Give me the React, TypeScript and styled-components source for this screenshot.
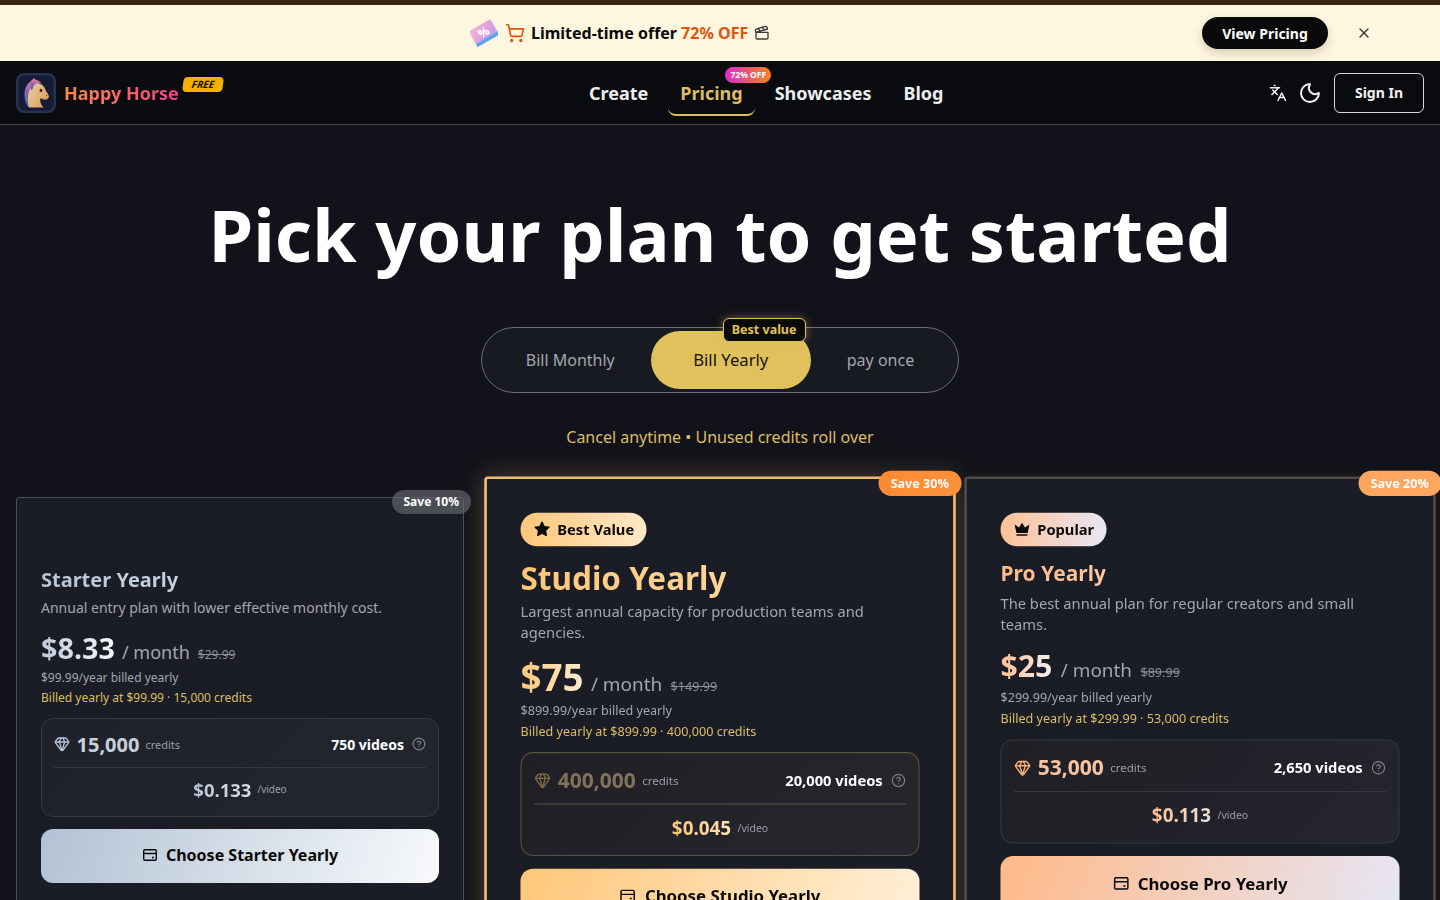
import React from 'react';
import styled, { createGlobalStyle } from 'styled-components';
import { Clapperboard, CircleHelp, Gem, Languages, Moon, ShoppingCart, X } from 'lucide-react';

const GlobalStyle = createGlobalStyle`
  html, body {
    margin: 0;
    height: 900px;
    overflow: hidden;
    background: #12131a;
    font-family: "Noto Sans", "Open Sans", sans-serif;
    color: #fff;
  }
  * { box-sizing: border-box; }
`;

const TopStrip = styled.div`
  height: 5px;
  background: #3a2516;
`;
const Banner = styled.div`
  height: 56px;
  background: #fff6e0;
  display: flex;
  align-items: center;
  padding: 0 68px 0 470px;
  color: #0a0a0a;
`;
const OfferText = styled.span`
  font-size: 16px;
  font-weight: 700;
  margin: 0 6px 0 6px;
  em {
    font-style: normal;
    color: #e0540f;
  }
`;
const CartIcon = styled(ShoppingCart)`
  color: #e0540f;
  margin-left: 7px;
`;
const ClapIcon = styled(Clapperboard)`
  color: #3a3a3a;
`;
const ViewPricing = styled.button`
  margin-left: auto;
  width: 126px;
  height: 32px;
  border: 0;
  border-radius: 16px;
  background: #0a0a0a;
  color: #fff;
  font: 700 14px "Noto Sans", sans-serif;
  box-shadow: 0 4px 10px rgba(60, 40, 10, 0.2);
`;
const CloseButton = styled.button`
  margin-left: 28px;
  width: 16px;
  height: 16px;
  padding: 0;
  border: 0;
  background: none;
  color: #3d3a36;
  display: flex;
`;

const NavBar = styled.header`
  height: 64px;
  background: #0a0b0e;
  border-bottom: 1px solid #3c3f48;
  display: flex;
  align-items: center;
  padding: 0 16px;
`;
const LogoBlock = styled.div`
  position: relative;
  width: 207px;
  display: flex;
  align-items: center;
  gap: 8px;
`;
const LogoMark = styled.svg`
  width: 40px;
  height: 40px;
  border-radius: 8px;
  flex: none;
`;
const BrandName = styled.span`
  font-size: 18px;
  font-weight: 700;
  background: linear-gradient(90deg, #ff8a4c, #ee3f84);
  -webkit-background-clip: text;
  background-clip: text;
  color: transparent;
`;
const FreeBadge = styled.span`
  position: absolute;
  left: 167px;
  top: 4px;
  width: 40px;
  height: 15px;
  border-radius: 4px;
  background: #f5b000;
  color: #1a1200;
  font-size: 10px;
  font-weight: 700;
  font-style: italic;
  line-height: 15px;
  text-align: center;
  transform: skewX(-8deg);
`;
const NavLinks = styled.nav`
  margin-left: 354px;
  display: flex;
  align-items: center;
  gap: 8px;
`;
const NavItem = styled.a<{ $active?: boolean }>`
  position: relative;
  height: 46px;
  padding: 2px 12px 0;
  display: flex;
  align-items: center;
  font-size: 18px;
  font-weight: 700;
  color: ${p => (p.$active ? '#dcbd62' : '#eceef2')};
  border-bottom: 2px solid ${p => (p.$active ? '#dcbd62' : 'transparent')};
  border-radius: 8px;
`;
const OffBadge = styled.span`
  position: absolute;
  left: 57px;
  top: -3px;
  width: 46px;
  height: 16px;
  border-radius: 8px;
  background: linear-gradient(90deg, #e02cc8, #f9801e);
  color: #fff;
  font-size: 8.5px;
  font-weight: 700;
  line-height: 16px;
  text-align: center;
`;
const NavRight = styled.div`
  margin-left: auto;
  display: flex;
  align-items: center;
  color: #f2f2f2;
`;
const MoonIcon = styled(Moon)`
  margin: 0 12px 0 11px;
`;
const SignIn = styled.button`
  width: 90px;
  height: 40px;
  border: 1px solid #d8d8d8;
  border-radius: 6px;
  background: transparent;
  color: #f2f2f2;
  font: 700 14px "Noto Sans", sans-serif;
`;

const Main = styled.main`
  padding-top: 59px;
`;
const Heading = styled.h1`
  margin: 0;
  text-align: center;
  font-size: 72px;
  line-height: 100px;
  font-weight: 700;
  letter-spacing: 0.04px;
  color: #fff;
`;
const ToggleRow = styled.div`
  margin-top: 43px;
  display: flex;
  justify-content: center;
`;
const Toggle = styled.div`
  position: relative;
  height: 66px;
  padding: 3px 8px;
  display: flex;
  background: #181a22;
  border: 1px solid #6b6e76;
  border-radius: 33px;
`;
const ToggleOption = styled.button<{ $active?: boolean }>`
  height: 58px;
  width: ${p => (p.$active ? '160px' : 'auto')};
  padding: 0 36px ${p => (p.$active ? '2px' : '0')};
  border: 0;
  border-radius: 29px;
  background: ${p => (p.$active ? '#e0c15c' : 'transparent')};
  color: ${p => (p.$active ? '#16140c' : '#a3a6b0')};
  font: 400 ${p => (p.$active ? '16.7px' : '16px')} "Noto Sans", sans-serif;
`;
const BestValueTag = styled.span`
  position: absolute;
  left: 241px;
  top: -10px;
  height: 24px;
  padding: 0 9px 0 8px;
  border: 1px solid #e0c15c;
  border-radius: 6px;
  background: #0a0a0a;
  box-shadow: 0 0 8px rgba(224, 193, 92, 0.45);
  color: #e0c15c;
  font-size: 12.5px;
  font-weight: 700;
  line-height: 22px;
`;
const Caption = styled.p`
  margin: 32px 0 0;
  text-align: center;
  font-size: 16px;
  line-height: 24px;
  color: #dcbd62;
`;

const CardGrid = styled.section`
  margin-top: 48px;
  padding: 0 16px;
  display: grid;
  grid-template-columns: repeat(3, 1fr);
  gap: 32px;
`;

type Tone = {
  border: string;
  glow: string;
  save: string;
  button: string;
  boxBorder: string;
  boxBg: string;
  creditColor: string;
  gemColor: string;
};
type Sizes = {
  featured: boolean;
  title: number;
  titleLine: number;
  descGap: number;
  price: number;
  priceGap: number;
  priceHeight: number;
  priceLine: number;
  unitGap: number;
  boxGap: number;
  perSize: number;
};

const Card = styled.article<{ $tone: Tone; $s: Sizes }>`
  position: relative;
  height: 800px;
  padding: ${p => (p.$s.featured ? '32px' : '24px')};
  background: #1a1d26;
  border: ${p => (p.$s.featured ? 2 : 1)}px solid ${p => p.$tone.border};
  border-radius: 3px;
  box-shadow: ${p => p.$tone.glow};
  transform: ${p => (p.$s.featured ? 'scale(1.05)' : 'none')};
`;
const SaveTag = styled.span<{ $tone: Tone }>`
  position: absolute;
  top: -8px;
  right: -8px;
  height: 24px;
  padding: 0 12px;
  border-radius: 12px;
  background: ${p => p.$tone.save};
  color: #fff;
  font-size: 12px;
  font-weight: 700;
  line-height: 24px;
`;
const BadgeSlot = styled.div`
  height: 32px;
  margin-bottom: 12px;
`;
const PlanBadge = styled.span<{ $bg: string }>`
  height: 32px;
  padding: 0 12px 1px;
  display: inline-flex;
  align-items: center;
  gap: 6px;
  border-radius: 16px;
  background: ${p => p.$bg};
  color: #0a0a0a;
  font-size: 14px;
  font-weight: 700;
`;
const GradientText = styled.span<{ $bg: string }>`
  background: ${p => p.$bg};
  -webkit-background-clip: text;
  background-clip: text;
  color: transparent;
`;
const Title = styled.h2<{ $s: Sizes }>`
  margin: 0;
  font-size: ${p => p.$s.title}px;
  line-height: ${p => p.$s.titleLine}px;
  font-weight: 700;
`;
const Description = styled.p<{ $s: Sizes }>`
  margin: ${p => p.$s.descGap}px 0 0;
  font-size: 14px;
  line-height: 20px;
  color: #a3a6b0;
`;
const PriceRow = styled.div<{ $s: Sizes }>`
  height: ${p => p.$s.priceHeight}px;
  margin-top: ${p => p.$s.priceGap}px;
  display: flex;
  align-items: baseline;
  line-height: ${p => p.$s.priceLine}px;
`;
const Price = styled(GradientText)<{ $s: Sizes }>`
  font-size: ${p => p.$s.price}px;
  font-weight: 700;
`;
const Unit = styled.span<{ $s: Sizes }>`
  margin-left: ${p => p.$s.unitGap}px;
  font-size: 18px;
  color: #a3a6b0;
`;
const Strike = styled.s`
  margin-left: 8px;
  font-size: 12px;
  color: #8a8d96;
`;
const YearLine = styled.p`
  margin: 3px 0 0;
  font-size: 12px;
  line-height: 18px;
  color: #a3a6b0;
`;
const BilledLine = styled(YearLine)`
  margin-top: 2px;
  color: #dcbd62;
`;
const CreditBox = styled.div<{ $tone: Tone; $s: Sizes }>`
  margin-top: ${p => p.$s.boxGap}px;
  height: 99px;
  padding: 12px;
  border: 1px solid ${p => p.$tone.boxBorder};
  border-radius: 12px;
  background: ${p => p.$tone.boxBg};
`;
const CreditRow = styled.div<{ $s: Sizes }>`
  height: 28px;
  padding-bottom: ${p => (p.$s.featured ? '1px' : '2px')};
  display: flex;
  align-items: center;
`;
const GemIcon = styled(Gem)<{ $color: string }>`
  color: ${p => p.$color};
  margin-right: 6.5px;
  flex: none;
`;
const CreditCount = styled.span<{ $color: string }>`
  font-size: 20px;
  font-weight: 700;
  color: ${p => p.$color};
`;
const SmallLabel = styled.span`
  margin-left: 6px;
  font-size: 11px;
  color: #9a9da6;
`;
const Videos = styled.span`
  margin-left: auto;
  font-size: 14px;
  font-weight: 700;
  color: #fff;
`;
const HelpIcon = styled(CircleHelp)`
  margin-left: 8px;
  color: #7c7f88;
`;
const Divider = styled.div<{ $tone: Tone }>`
  height: 1px;
  margin: 8px 0;
  background: ${p => p.$tone.boxBorder};
`;
const PerVideo = styled.div<{ $s: Sizes }>`
  height: 28px;
  padding-bottom: ${p => (p.$s.featured ? '0' : '2px')};
  display: flex;
  justify-content: center;
  align-items: center;
`;
const PerVideoPrice = styled(GradientText)<{ $s: Sizes }>`
  font-size: ${p => p.$s.perSize}px;
  font-weight: 700;
`;
const PerVideoLabel = styled.span`
  margin-left: 6px;
  font-size: 10px;
  color: #9a9da6;
`;
const ChooseButton = styled.button<{ $tone: Tone }>`
  width: 100%;
  height: 54px;
  margin-top: 12px;
  padding: 0 0 2px;
  border: 0;
  border-radius: 12px;
  background: ${p => p.$tone.button};
  color: #0a0a0a;
  font: 700 16px "Noto Sans", sans-serif;
  display: flex;
  align-items: center;
  justify-content: center;
  gap: 8px;
`;
const BadgeGlyph = styled.svg`
  width: 17px;
  height: 17px;
  flex: none;
`;
const CardGlyph = styled.svg`
  width: 16px;
  height: 16px;
  flex: none;
`;

const HorseLogo = () => (
  <LogoMark viewBox="0 0 40 40">
    <defs>
      <linearGradient id="mane" x1="0" y1="0" x2="0" y2="1">
        <stop offset="0" stopColor="#e782a8" />
        <stop offset="0.45" stopColor="#8a5fb4" />
        <stop offset="1" stopColor="#3c6fb8" />
      </linearGradient>
      <linearGradient id="coat" x1="0" y1="0" x2="1" y2="1">
        <stop offset="0" stopColor="#f0cf9c" />
        <stop offset="1" stopColor="#d99f62" />
      </linearGradient>
    </defs>
    <rect width="40" height="40" fill="#26324f" />
    <rect x="2.500" y="2.500" width="35" height="35" rx="6" fill="#141c36" />
    <path d="M19 6C12 8 8 15 8.500 23c.2 4 1.500 8 3.500 11l7-4 3-20z" fill="url(#mane)" />
    <path d="M16 13l1-8 4 5c5 .5 7.500 3.500 8.500 7l3 5c1 2.500-.5 4.500-3 4.500-2 0-3.500-.5-5-1.500-1 3 0 6 3 9.500H13c-2-7-1.500-16 3-21.500z" fill="url(#coat)" />
    <path d="M15 8c3-2.500 8-1.500 11 2.500-4-1-7 0-8.500 2.500-.5 2-1 3.500-2 4.500C14 14 14 10.500 15 8z" fill="url(#mane)" />
    <ellipse cx="25" cy="17.500" rx="1.400" ry="1.700" fill="#3a2212" />
    <circle cx="30.500" cy="22.500" r="0.700" fill="#7a4f2e" />
    <path d="M26 25.500c2 .8 4 .8 5.500-.3" stroke="#a8733f" strokeWidth="0.700" fill="none" />
  </LogoMark>
);

const TicketArt = () => (
  <svg width="28" height="28" viewBox="0 0 28 28">
    <defs>
      <linearGradient id="ticket" x1="0" y1="0" x2="1" y2="1">
        <stop offset="0" stopColor="#f9b3d4" />
        <stop offset="0.65" stopColor="#d69fe4" />
        <stop offset="1" stopColor="#b5a8ee" />
      </linearGradient>
    </defs>
    <g transform="rotate(-30 14 14)">
      <rect x="1.500" y="5" width="25" height="18" rx="2" fill="url(#ticket)" />
      <rect x="1.500" y="19.500" width="25" height="3.500" fill="#5aa8ea" />
      <text x="14" y="17.500" textAnchor="middle" fontSize="12" fontWeight="700" fill="#fff" fontFamily="Noto Sans">%</text>
    </g>
  </svg>
);

const StarGlyph = () => (
  <BadgeGlyph viewBox="0 0 24 24">
    <path fill="#0a0a0a" stroke="#0a0a0a" strokeWidth="2" strokeLinejoin="round" d="M12 3l2.800 5.900 6.400.8-4.700 4.400 1.200 6.400L12 17.400l-5.700 3.100 1.200-6.400L2.800 9.700l6.400-.8z" />
  </BadgeGlyph>
);

const CrownGlyph = () => (
  <BadgeGlyph viewBox="0 0 24 24">
    <path fill="#0a0a0a" d="M12 3.500l4 6.500 6-4-2.500 11.500h-15L2 6l6 4z" />
    <rect x="4.500" y="19" width="15" height="2.200" rx="0.600" fill="#0a0a0a" />
  </BadgeGlyph>
);

const PlanCardGlyph = () => (
  <CardGlyph viewBox="0 0 16 16" fill="none" stroke="#0a0a0a" strokeWidth="1.400">
    <rect x="1.700" y="2.700" width="12.600" height="10.600" rx="1.200" />
    <path d="M1.700 6.500h12.600M10 10.500h2" />
  </CardGlyph>
);

const plans: {
  name: string;
  desc: string;
  price: string;
  strike: string;
  year: string;
  billed: string;
  credits: string;
  videos: string;
  perVideo: string;
  save: string;
  badge?: { label: string; bg: string; icon: React.ReactNode };
  titleBg: string;
  priceBg: string;
  perBg: string;
  tone: Tone;
  sizes: Sizes;
}[] = [
  {
    name: 'Starter Yearly',
    desc: 'Annual entry plan with lower effective monthly cost.',
    price: '$8.33',
    strike: '$29.99',
    year: '$99.99/year billed yearly',
    billed: 'Billed yearly at $99.99 · 15,000 credits',
    credits: '15,000',
    videos: '750 videos',
    perVideo: '$0.133',
    save: 'Save 10%',
    titleBg: 'linear-gradient(90deg, #b8c5d6, #c8d2de)',
    priceBg: 'linear-gradient(90deg, #c0ccda, #f5f7fa)',
    perBg: 'linear-gradient(90deg, #b8c5d6, #d8dee6)',
    tone: {
      border: '#4a4e58',
      glow: 'none',
      save: 'rgba(110, 112, 118, 0.6)',
      button: 'linear-gradient(110deg, #b2c1d4, #f8fafc)',
      boxBorder: '#363943',
      boxBg: 'linear-gradient(135deg, #1f222b, #24262e)',
      creditColor: '#c8d0dc',
      gemColor: '#b8c5d6',
    },
    sizes: {
      featured: false, title: 20, titleLine: 28, descGap: 4, price: 28.8, priceGap: 12,
      priceHeight: 36, priceLine: 36, unitGap: 7, boxGap: 11, perSize: 18.5,
    },
  },
  {
    name: 'Studio Yearly',
    desc: 'Largest annual capacity for production teams and agencies.',
    price: '$75',
    strike: '$149.99',
    year: '$899.99/year billed yearly',
    billed: 'Billed yearly at $899.99 · 400,000 credits',
    credits: '400,000',
    videos: '20,000 videos',
    perVideo: '$0.045',
    save: 'Save 30%',
    badge: { label: 'Best Value', bg: 'linear-gradient(90deg, #ffc679, #ffe9c9)', icon: <StarGlyph /> },
    titleBg: 'linear-gradient(90deg, #ffc679, #ffd596)',
    priceBg: 'linear-gradient(90deg, #ffc679, #ffeccf)',
    perBg: 'linear-gradient(90deg, #ffc679, #ffe2b2)',
    tone: {
      border: '#f0bb72',
      glow: '0 0 0 0.5px #f0bb72, 0 0 24px rgba(240, 187, 114, 0.28)',
      save: 'linear-gradient(90deg, #ff8a32, #fb923c)',
      button: 'linear-gradient(110deg, #ffc679, #fff0d8)',
      boxBorder: '#5c5040',
      boxBg: 'linear-gradient(135deg, #1f1f25, #26262c)',
      creditColor: '#7f735b',
      gemColor: '#7f6a45',
    },
    sizes: {
      featured: true, title: 30, titleLine: 37, descGap: 3, price: 35, priceGap: 12,
      priceHeight: 41, priceLine: 41, unitGap: 7, boxGap: 10, perSize: 18,
    },
  },
  {
    name: 'Pro Yearly',
    desc: 'The best annual plan for regular creators and small teams.',
    price: '$25',
    strike: '$89.99',
    year: '$299.99/year billed yearly',
    billed: 'Billed yearly at $299.99 · 53,000 credits',
    credits: '53,000',
    videos: '2,650 videos',
    perVideo: '$0.113',
    save: 'Save 20%',
    badge: { label: 'Popular', bg: 'linear-gradient(90deg, #ffc195, #e9e6f6)', icon: <CrownGlyph /> },
    titleBg: 'linear-gradient(90deg, #ffb987, #ffc79e)',
    priceBg: 'linear-gradient(90deg, #ffc195, #f4eeee)',
    perBg: 'linear-gradient(90deg, #ffc195, #e9e0dc)',
    tone: {
      border: '#514a46',
      glow: '0 0 0 0.5px #514a46, 0 0 14px rgba(240, 187, 114, 0.06)',
      save: '#fda65f',
      button: 'linear-gradient(110deg, #ffb987, #e6e6f6)',
      boxBorder: '#383840',
      boxBg: 'linear-gradient(135deg, #1f1f25, #24252d)',
      creditColor: '#f7c4a0',
      gemColor: '#fdb176',
    },
    sizes: {
      featured: true, title: 20, titleLine: 28, descGap: 5, price: 28.8, priceGap: 11,
      priceHeight: 36, priceLine: 34, unitGap: 8, boxGap: 11, perSize: 18,
    },
  },
];

export default function App() {
  return (
    <>
      <GlobalStyle />
      <TopStrip />
      <Banner>
        <TicketArt />
        <CartIcon size={20} />
        <OfferText>
          Limited-time offer <em>72% OFF</em>
        </OfferText>
        <ClapIcon size={16} />
        <ViewPricing type="button">View Pricing</ViewPricing>
        <CloseButton type="button" aria-label="Close">
          <X size={16} />
        </CloseButton>
      </Banner>
      <NavBar>
        <LogoBlock>
          <HorseLogo />
          <BrandName>Happy Horse</BrandName>
          <FreeBadge>FREE</FreeBadge>
        </LogoBlock>
        <NavLinks>
          <NavItem>Create</NavItem>
          <NavItem $active>
            Pricing
            <OffBadge>72% OFF</OffBadge>
          </NavItem>
          <NavItem>Showcases</NavItem>
          <NavItem>Blog</NavItem>
        </NavLinks>
        <NavRight>
          <Languages size={18} />
          <MoonIcon size={24} />
          <SignIn type="button">Sign In</SignIn>
        </NavRight>
      </NavBar>
      <Main>
        <Heading>Pick your plan to get started</Heading>
        <ToggleRow>
          <Toggle>
            <ToggleOption type="button">Bill Monthly</ToggleOption>
            <ToggleOption type="button" $active>Bill Yearly</ToggleOption>
            <ToggleOption type="button">pay once</ToggleOption>
            <BestValueTag>Best value</BestValueTag>
          </Toggle>
        </ToggleRow>
        <Caption>Cancel anytime • Unused credits roll over</Caption>
        <CardGrid>
          {plans.map(plan => (
            <Card key={plan.name} $tone={plan.tone} $s={plan.sizes}>
              <SaveTag $tone={plan.tone}>{plan.save}</SaveTag>
              <BadgeSlot>
                {plan.badge && (
                  <PlanBadge $bg={plan.badge.bg}>
                    {plan.badge.icon}
                    {plan.badge.label}
                  </PlanBadge>
                )}
              </BadgeSlot>
              <Title $s={plan.sizes}>
                <GradientText $bg={plan.titleBg}>{plan.name}</GradientText>
              </Title>
              <Description $s={plan.sizes}>{plan.desc}</Description>
              <PriceRow $s={plan.sizes}>
                <Price $bg={plan.priceBg} $s={plan.sizes}>{plan.price}</Price>
                <Unit $s={plan.sizes}>/ month</Unit>
                <Strike>{plan.strike}</Strike>
              </PriceRow>
              <YearLine>{plan.year}</YearLine>
              <BilledLine>{plan.billed}</BilledLine>
              <CreditBox $tone={plan.tone} $s={plan.sizes}>
                <CreditRow $s={plan.sizes}>
                  <GemIcon size={16} $color={plan.tone.gemColor} />
                  <CreditCount $color={plan.tone.creditColor}>{plan.credits}</CreditCount>
                  <SmallLabel>credits</SmallLabel>
                  <Videos>{plan.videos}</Videos>
                  <HelpIcon size={14} />
                </CreditRow>
                <Divider $tone={plan.tone} />
                <PerVideo $s={plan.sizes}>
                  <PerVideoPrice $bg={plan.perBg} $s={plan.sizes}>{plan.perVideo}</PerVideoPrice>
                  <PerVideoLabel>/video</PerVideoLabel>
                </PerVideo>
              </CreditBox>
              <ChooseButton type="button" $tone={plan.tone}>
                <PlanCardGlyph />
                Choose {plan.name}
              </ChooseButton>
            </Card>
          ))}
        </CardGrid>
      </Main>
    </>
  );
}
